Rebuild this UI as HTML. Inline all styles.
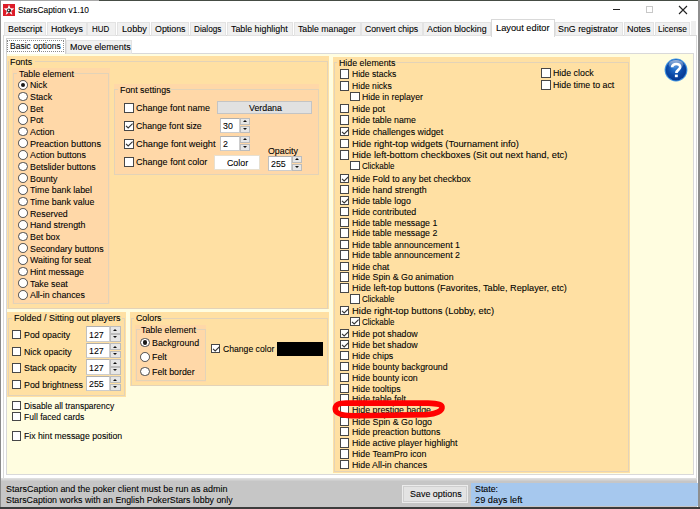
<!DOCTYPE html>
<html><head><meta charset="utf-8"><style>
*{margin:0;padding:0;box-sizing:border-box}
html,body{width:700px;height:509px;overflow:hidden;background:#fff;position:relative;font-family:"Liberation Sans",sans-serif}
.t{position:absolute;white-space:nowrap;line-height:12px;font-size:9.6px;color:#000;-webkit-text-stroke:0.08px #000;transform-origin:0 50%}
.bx{position:absolute}
.cb{position:absolute;width:9.7px;height:9.5px;border:1px solid #474747;background:#fff}
.rb{position:absolute;width:9.7px;height:9.7px;border:1px solid #4a4a4a;border-radius:50%;background:#fff}
.rb i{position:absolute;left:1.8px;top:1.8px;width:4.5px;height:4.5px;border-radius:50%;background:#1a1a1a}
.tb{position:absolute;background:#fff;border:1px solid #cdcdcd;border-top-color:#b0b0b0;border-left-color:#c0c0c0}
.sp{position:absolute;background:#e6e6e6;border:1px solid #bcbcbc}
.sp b{position:absolute;left:50%;top:50%;width:0;height:0;border-left:2.5px solid transparent;border-right:2.5px solid transparent;margin-left:-2.5px}
.sp b.up{border-bottom:2.6px solid #111;margin-top:-1.0px}
.sp b.dn{border-top:2.6px solid #111;margin-top:-1.8px}
.tab{position:absolute;background:#f0f0f0;border:1px solid #e3e3e3}
</style></head>
<body>
<div class="bx" style="left:0px;top:0px;width:99px;height:1px;background:#a8a8a8;"></div>
<div class="bx" style="left:99px;top:0px;width:601px;height:1px;background:#454c44;"></div>
<div class="bx" style="left:0px;top:0px;width:1.2px;height:509px;background:#8a8a8a;"></div>
<div class="bx" style="left:698px;top:0px;width:1.5px;height:509px;background:#8e8e8e;"></div>
<svg class="bx" style="left:3px;top:3.5px" width="12" height="12" viewBox="0 0 12 12"><rect width="12" height="12" fill="#dd1c28"/><path d="M6 0.6 L7.35 4.3 L11.4 4.4 L8.2 6.9 L9.35 10.9 L6 8.6 L2.65 10.9 L3.8 6.9 L0.6 4.4 L4.65 4.3 Z" fill="#fff"/><circle cx="6" cy="6.6" r="2.1" fill="#1a1a1a"/><circle cx="5.6" cy="6.3" r="0.9" fill="#fff"/></svg>
<div class="t" style="left:17.9px;top:3.8px;font-size:9.6px;color:#000;transform:scaleX(0.8702)">StarsCaption v1.10</div>
<div class="bx" style="left:612.6px;top:9.2px;width:7.699999999999932px;height:1.200000000000001px;background:#222;"></div>
<div class="bx" style="left:645.5px;top:6.4px;width:7.5px;height:6.8px;border:1px solid #c8c8c8"></div>
<svg class="bx" style="left:678px;top:5px" width="10" height="10" viewBox="0 0 10 10"><path d="M1 1 L9 9 M9 1 L1 9" stroke="#222" stroke-width="1.1"/></svg>
<div class="bx" style="left:2.6px;top:35.3px;width:694.5px;height:444.5px;border:1px solid #d9d9d9;background:#fff"></div>
<div class="tab" style="left:3.8px;top:22.3px;width:42.1px;height:13.5px"></div>
<div class="t" style="left:7.7px;top:22.9px;font-size:9.6px;color:#000;transform:scaleX(0.9191)">Betscript</div>
<div class="tab" style="left:46.6px;top:22.3px;width:39.99999999999999px;height:13.5px"></div>
<div class="t" style="left:51px;top:22.9px;font-size:9.6px;color:#000;transform:scaleX(0.9200)">Hotkeys</div>
<div class="tab" style="left:87.4px;top:22.3px;width:29.0px;height:13.5px"></div>
<div class="t" style="left:91.7px;top:22.9px;font-size:9.6px;color:#000;transform:scaleX(0.8275)">HUD</div>
<div class="tab" style="left:116.9px;top:22.3px;width:33.400000000000006px;height:13.5px"></div>
<div class="t" style="left:122px;top:22.9px;font-size:9.6px;color:#000;transform:scaleX(0.9526)">Lobby</div>
<div class="tab" style="left:151px;top:22.3px;width:38.19999999999999px;height:13.5px"></div>
<div class="t" style="left:154.9px;top:22.9px;font-size:9.6px;color:#000;transform:scaleX(0.9225)">Options</div>
<div class="tab" style="left:189.7px;top:22.3px;width:36.30000000000001px;height:13.5px"></div>
<div class="t" style="left:194px;top:22.9px;font-size:9.6px;color:#000;transform:scaleX(0.8564)">Dialogs</div>
<div class="tab" style="left:226.5px;top:22.3px;width:66.39999999999998px;height:13.5px"></div>
<div class="t" style="left:231.1px;top:22.9px;font-size:9.6px;color:#000;transform:scaleX(0.9228)">Table highlight</div>
<div class="tab" style="left:293.7px;top:22.3px;width:67.19999999999999px;height:13.5px"></div>
<div class="t" style="left:298px;top:22.9px;font-size:9.6px;color:#000;transform:scaleX(0.9092)">Table manager</div>
<div class="tab" style="left:361.4px;top:22.3px;width:61.200000000000045px;height:13.5px"></div>
<div class="t" style="left:365.1px;top:22.9px;font-size:9.6px;color:#000;transform:scaleX(0.9070)">Convert chips</div>
<div class="tab" style="left:423.4px;top:22.3px;width:67.20000000000005px;height:13.5px"></div>
<div class="t" style="left:427.4px;top:22.9px;font-size:9.6px;color:#000;transform:scaleX(0.9252)">Action blocking</div>
<div class="bx" style="left:491px;top:19.4px;width:63.5px;height:17.5px;background:#fff;border:1px solid #d9d9d9;border-bottom:none"></div>
<div class="t" style="left:496.2px;top:21.6px;font-size:9.6px;color:#000;transform:scaleX(0.9645)">Layout editor</div>
<div class="tab" style="left:555.4px;top:22.3px;width:67.5px;height:13.5px"></div>
<div class="t" style="left:558.1px;top:22.9px;font-size:9.6px;color:#000;transform:scaleX(0.9224)">SnG registrator</div>
<div class="tab" style="left:623.9px;top:22.3px;width:30.0px;height:13.5px"></div>
<div class="t" style="left:626.7px;top:22.9px;font-size:9.6px;color:#000;transform:scaleX(0.9417)">Notes</div>
<div class="tab" style="left:655px;top:22.3px;width:35.39999999999998px;height:13.5px"></div>
<div class="t" style="left:658.2px;top:22.9px;font-size:9.6px;color:#000;transform:scaleX(0.8740)">License</div>
<div class="bx" style="left:690.6px;top:20.8px;width:5.899999999999977px;height:13.8px;background:#efefef;"></div>
<div class="bx" style="left:6.3px;top:53.3px;width:688.1px;height:421.4px;border:1px solid #d9d9d9;background:#fffde0"></div>
<div class="tab" style="left:65.6px;top:40.4px;width:66.2px;height:13.4px"></div>
<div class="t" style="left:69.6px;top:41.1px;font-size:9.6px;color:#000;transform:scaleX(0.9331)">Move elements</div>
<div class="bx" style="left:5.8px;top:38.3px;width:59.8px;height:16px;background:#fff;border:1px solid #d0d0d0;border-bottom:none"></div>
<div class="bx" style="left:7.4px;top:40.3px;width:56.8px;height:11.8px;border:1px dotted #8a8a8a"></div>
<div class="t" style="left:10.3px;top:39.5px;font-size:9.6px;color:#000;transform:scaleX(0.8885)">Basic options</div>
<div class="bx" style="left:7.2px;top:55.8px;width:321.6px;height:253.39999999999998px;background:#ffe0a3;"></div>
<div class="bx" style="left:8.0px;top:61.3px;width:320.2px;height:247.7px;border:1px solid #e3d3b8;box-sizing:border-box"></div>
<div class="bx" style="left:8.7px;top:61px;width:26px;height:2px;background:#ffe0a3"></div>
<div class="t" style="left:10.2px;top:56.2px;font-size:9.6px;color:#000;transform:scaleX(0.9200)">Fonts</div>
<div class="bx" style="left:11.9px;top:67.6px;width:98.1px;height:236.4px;background:#ffd8a8;"></div>
<div class="bx" style="left:12.700000000000001px;top:72.5px;width:96.7px;height:231.3px;border:1px solid #e3d3b8;box-sizing:border-box"></div>
<div class="bx" style="left:17.0px;top:72.2px;width:55px;height:2px;background:#ffd8a8"></div>
<div class="t" style="left:18.5px;top:67.5px;font-size:9.6px;color:#000;transform:scaleX(0.9200)">Table element</div>
<div class="rb" style="left:17.9px;top:80.1px"><i></i></div>
<div class="t" style="left:30.2px;top:79.2px;font-size:9.6px;color:#000;transform:scaleX(0.9200)">Nick</div>
<div class="rb" style="left:17.9px;top:91.7px"></div>
<div class="t" style="left:30.2px;top:90.8px;font-size:9.6px;color:#000;transform:scaleX(0.9200)">Stack</div>
<div class="rb" style="left:17.9px;top:103.4px"></div>
<div class="t" style="left:30.2px;top:102.5px;font-size:9.6px;color:#000;transform:scaleX(0.9200)">Bet</div>
<div class="rb" style="left:17.9px;top:115.1px"></div>
<div class="t" style="left:30.2px;top:114.2px;font-size:9.6px;color:#000;transform:scaleX(0.9200)">Pot</div>
<div class="rb" style="left:17.9px;top:126.7px"></div>
<div class="t" style="left:30.2px;top:125.8px;font-size:9.6px;color:#000;transform:scaleX(0.9200)">Action</div>
<div class="rb" style="left:17.9px;top:138.4px"></div>
<div class="t" style="left:30.2px;top:137.5px;font-size:9.6px;color:#000;transform:scaleX(0.9509)">Preaction buttons</div>
<div class="rb" style="left:17.9px;top:150.1px"></div>
<div class="t" style="left:30.2px;top:149.2px;font-size:9.6px;color:#000;transform:scaleX(0.9200)">Action buttons</div>
<div class="rb" style="left:17.9px;top:161.7px"></div>
<div class="t" style="left:30.2px;top:160.8px;font-size:9.6px;color:#000;transform:scaleX(0.9200)">Betslider buttons</div>
<div class="rb" style="left:17.9px;top:173.4px"></div>
<div class="t" style="left:30.2px;top:172.5px;font-size:9.6px;color:#000;transform:scaleX(0.9200)">Bounty</div>
<div class="rb" style="left:17.9px;top:185.1px"></div>
<div class="t" style="left:30.2px;top:184.2px;font-size:9.6px;color:#000;transform:scaleX(0.9200)">Time bank label</div>
<div class="rb" style="left:17.9px;top:196.8px"></div>
<div class="t" style="left:30.2px;top:195.9px;font-size:9.6px;color:#000;transform:scaleX(0.9200)">Time bank value</div>
<div class="rb" style="left:17.9px;top:208.4px"></div>
<div class="t" style="left:30.2px;top:207.5px;font-size:9.6px;color:#000;transform:scaleX(0.9200)">Reserved</div>
<div class="rb" style="left:17.9px;top:220.1px"></div>
<div class="t" style="left:30.2px;top:219.2px;font-size:9.6px;color:#000;transform:scaleX(0.9200)">Hand strength</div>
<div class="rb" style="left:17.9px;top:231.8px"></div>
<div class="t" style="left:30.2px;top:230.9px;font-size:9.6px;color:#000;transform:scaleX(0.9200)">Bet box</div>
<div class="rb" style="left:17.9px;top:243.4px"></div>
<div class="t" style="left:30.2px;top:242.5px;font-size:9.6px;color:#000;transform:scaleX(0.9200)">Secondary buttons</div>
<div class="rb" style="left:17.9px;top:255.1px"></div>
<div class="t" style="left:30.2px;top:254.2px;font-size:9.6px;color:#000;transform:scaleX(0.9200)">Waiting for seat</div>
<div class="rb" style="left:17.9px;top:266.8px"></div>
<div class="t" style="left:30.2px;top:265.9px;font-size:9.6px;color:#000;transform:scaleX(0.9200)">Hint message</div>
<div class="rb" style="left:17.9px;top:278.4px"></div>
<div class="t" style="left:30.2px;top:277.5px;font-size:9.6px;color:#000;transform:scaleX(0.9200)">Take seat</div>
<div class="rb" style="left:17.9px;top:290.1px"></div>
<div class="t" style="left:30.2px;top:289.2px;font-size:9.6px;color:#000;transform:scaleX(0.9200)">All-in chances</div>
<div class="bx" style="left:113.6px;top:84.4px;width:205.70000000000002px;height:90.79999999999998px;background:#ffd8a8;"></div>
<div class="bx" style="left:114.39999999999999px;top:89.1px;width:204.3px;height:85.9px;border:1px solid #e3d3b8;box-sizing:border-box"></div>
<div class="bx" style="left:118.3px;top:88.8px;width:53px;height:2px;background:#ffd8a8"></div>
<div class="t" style="left:119.8px;top:84.0px;font-size:9.6px;color:#000;transform:scaleX(0.9200)">Font settings</div>
<div class="cb" style="left:124.0px;top:103.2px"></div>
<div class="t" style="left:136.0px;top:102.2px;font-size:9.6px;color:#000;transform:scaleX(0.9374)">Change font name</div>
<div class="bx" style="left:216.7px;top:100.6px;width:95.3px;height:13.8px;background:#e1e1e1;border:1px solid #c4c4c4"></div>
<div class="t" style="left:248.5px;top:101.8px;font-size:9.6px;color:#000;transform:scaleX(0.9200)">Verdana</div>
<div class="cb" style="left:124.0px;top:121.2px"><svg width="10" height="10" viewBox="0 0 10 10" style="position:absolute;left:-1px;top:-1px"><path d="M2 4.8 L4.2 7 L8.6 2.6" fill="none" stroke="#333" stroke-width="1.1"/></svg></div>
<div class="t" style="left:136.0px;top:120.2px;font-size:9.6px;color:#000;transform:scaleX(0.9125)">Change font size</div>
<div class="tb" style="left:220px;top:117.7px;width:20.19999999999999px;height:15.499999999999986px"></div>
<div class="t" style="left:223px;top:120.0px;font-size:9.6px;color:#000;transform:scaleX(0.9200)">30</div>
<div class="sp" style="left:240.2px;top:117.7px;width:9.800000000000011px;height:7.4px"><b class="up"></b></div>
<div class="sp" style="left:240.2px;top:125.7px;width:9.800000000000011px;height:7.4px"><b class="dn"></b></div>
<div class="cb" style="left:124.0px;top:139.2px"><svg width="10" height="10" viewBox="0 0 10 10" style="position:absolute;left:-1px;top:-1px"><path d="M2 4.8 L4.2 7 L8.6 2.6" fill="none" stroke="#333" stroke-width="1.1"/></svg></div>
<div class="t" style="left:136.0px;top:138.2px;font-size:9.6px;color:#000;transform:scaleX(0.9616)">Change font weight</div>
<div class="tb" style="left:220px;top:135.8px;width:20.19999999999999px;height:15.399999999999977px"></div>
<div class="t" style="left:223px;top:138.1px;font-size:9.6px;color:#000;transform:scaleX(0.9200)">2</div>
<div class="sp" style="left:240.2px;top:135.8px;width:9.800000000000011px;height:7.4px"><b class="up"></b></div>
<div class="sp" style="left:240.2px;top:143.8px;width:9.800000000000011px;height:7.4px"><b class="dn"></b></div>
<div class="cb" style="left:124.0px;top:157.2px"></div>
<div class="t" style="left:136.0px;top:156.2px;font-size:9.6px;color:#000;transform:scaleX(0.9415)">Change font color</div>
<div class="bx" style="left:214px;top:154.9px;width:46px;height:15.4px;background:#fff;border:1px solid #e8e0d0"></div>
<div class="t" style="left:226.5px;top:156.8px;font-size:9.6px;color:#000;transform:scaleX(0.9200)">Color</div>
<div class="t" style="left:268.3px;top:144.8px;font-size:9.6px;color:#000;transform:scaleX(0.9200)">Opacity</div>
<div class="tb" style="left:267.7px;top:155.5px;width:24.600000000000023px;height:15.5px"></div>
<div class="t" style="left:270.7px;top:157.8px;font-size:9.6px;color:#000;transform:scaleX(0.9200)">255</div>
<div class="sp" style="left:292.3px;top:155.5px;width:9.899999999999977px;height:7.5px"><b class="up"></b></div>
<div class="sp" style="left:292.3px;top:163.6px;width:9.899999999999977px;height:7.5px"><b class="dn"></b></div>
<div class="bx" style="left:7.1px;top:311.9px;width:118.9px;height:84.70000000000005px;background:#ffe0a3;"></div>
<div class="bx" style="left:7.8999999999999995px;top:317.5px;width:117.5px;height:78.90000000000003px;border:1px solid #e3d3b8;box-sizing:border-box"></div>
<div class="bx" style="left:12.1px;top:317.2px;width:110px;height:2px;background:#ffe0a3"></div>
<div class="t" style="left:13.6px;top:312.4px;font-size:9.6px;color:#000;transform:scaleX(0.9385)">Folded / Sitting out players</div>
<div class="cb" style="left:11.8px;top:329.9px"></div>
<div class="t" style="left:23.8px;top:328.9px;font-size:9.6px;color:#000;transform:scaleX(0.9200)">Pod opacity</div>
<div class="tb" style="left:86.3px;top:326.3px;width:23.60000000000001px;height:15.300000000000011px"></div>
<div class="t" style="left:89.3px;top:328.5px;font-size:9.6px;color:#000;transform:scaleX(0.9200)">127</div>
<div class="sp" style="left:109.9px;top:326.3px;width:10.899999999999991px;height:7.4px"><b class="up"></b></div>
<div class="sp" style="left:109.9px;top:334.3px;width:10.899999999999991px;height:7.4px"><b class="dn"></b></div>
<div class="cb" style="left:11.8px;top:346.5px"></div>
<div class="t" style="left:23.8px;top:345.5px;font-size:9.6px;color:#000;transform:scaleX(0.9200)">Nick opacity</div>
<div class="tb" style="left:86.3px;top:342.85px;width:23.60000000000001px;height:15.300000000000011px"></div>
<div class="t" style="left:89.3px;top:345.1px;font-size:9.6px;color:#000;transform:scaleX(0.9200)">127</div>
<div class="sp" style="left:109.9px;top:342.85px;width:10.899999999999991px;height:7.4px"><b class="up"></b></div>
<div class="sp" style="left:109.9px;top:350.8px;width:10.899999999999991px;height:7.4px"><b class="dn"></b></div>
<div class="cb" style="left:11.8px;top:363.1px"></div>
<div class="t" style="left:23.8px;top:362.1px;font-size:9.6px;color:#000;transform:scaleX(0.9200)">Stack opacity</div>
<div class="tb" style="left:86.3px;top:359.40000000000003px;width:23.60000000000001px;height:15.300000000000011px"></div>
<div class="t" style="left:89.3px;top:361.6px;font-size:9.6px;color:#000;transform:scaleX(0.9200)">127</div>
<div class="sp" style="left:109.9px;top:359.40000000000003px;width:10.899999999999991px;height:7.4px"><b class="up"></b></div>
<div class="sp" style="left:109.9px;top:367.4px;width:10.899999999999991px;height:7.4px"><b class="dn"></b></div>
<div class="cb" style="left:11.8px;top:379.6px"></div>
<div class="t" style="left:23.8px;top:378.6px;font-size:9.6px;color:#000;transform:scaleX(0.9200)">Pod brightness</div>
<div class="tb" style="left:86.3px;top:375.95000000000005px;width:23.60000000000001px;height:15.300000000000011px"></div>
<div class="t" style="left:89.3px;top:378.2px;font-size:9.6px;color:#000;transform:scaleX(0.9200)">255</div>
<div class="sp" style="left:109.9px;top:375.95000000000005px;width:10.899999999999991px;height:7.4px"><b class="up"></b></div>
<div class="sp" style="left:109.9px;top:383.9px;width:10.899999999999991px;height:7.4px"><b class="dn"></b></div>
<div class="bx" style="left:130.3px;top:312.3px;width:198.7px;height:74.09999999999997px;background:#ffe0a3;"></div>
<div class="bx" style="left:131.10000000000002px;top:317.5px;width:197.29999999999995px;height:68.69999999999999px;border:1px solid #e3d3b8;box-sizing:border-box"></div>
<div class="bx" style="left:134.0px;top:317.2px;width:28px;height:2px;background:#ffe0a3"></div>
<div class="t" style="left:135.5px;top:312.4px;font-size:9.6px;color:#000;transform:scaleX(0.9200)">Colors</div>
<div class="bx" style="left:135px;top:324.5px;width:71.4px;height:57.19999999999999px;background:#ffd8a8;"></div>
<div class="bx" style="left:135.8px;top:328.6px;width:70.0px;height:52.89999999999998px;border:1px solid #e3d3b8;box-sizing:border-box"></div>
<div class="bx" style="left:139.8px;top:328.3px;width:55px;height:2px;background:#ffd8a8"></div>
<div class="t" style="left:141.3px;top:323.6px;font-size:9.6px;color:#000;transform:scaleX(0.9200)">Table element</div>
<div class="rb" style="left:140.1px;top:337.5px"><i></i></div>
<div class="t" style="left:152.4px;top:336.6px;font-size:9.6px;color:#000;transform:scaleX(0.9200)">Background</div>
<div class="rb" style="left:140.1px;top:352.3px"></div>
<div class="t" style="left:152.4px;top:351.4px;font-size:9.6px;color:#000;transform:scaleX(0.9200)">Felt</div>
<div class="rb" style="left:140.1px;top:366.8px"></div>
<div class="t" style="left:152.4px;top:365.9px;font-size:9.6px;color:#000;transform:scaleX(0.9200)">Felt border</div>
<div class="cb" style="left:210.5px;top:343.9px"><svg width="10" height="10" viewBox="0 0 10 10" style="position:absolute;left:-1px;top:-1px"><path d="M2 4.8 L4.2 7 L8.6 2.6" fill="none" stroke="#333" stroke-width="1.1"/></svg></div>
<div class="t" style="left:222.5px;top:342.9px;font-size:9.6px;color:#000;transform:scaleX(0.8990)">Change color</div>
<div class="bx" style="left:276.5px;top:341.5px;width:46.19999999999999px;height:14.5px;background:#000;"></div>
<div class="cb" style="left:11.8px;top:400.8px"></div>
<div class="t" style="left:23.8px;top:399.8px;font-size:9.6px;color:#000;transform:scaleX(0.8810)">Disable all transparency</div>
<div class="cb" style="left:11.8px;top:411.9px"></div>
<div class="t" style="left:23.8px;top:410.9px;font-size:9.6px;color:#000;transform:scaleX(0.8919)">Full faced cards</div>
<div class="cb" style="left:11.8px;top:431.2px"></div>
<div class="t" style="left:23.8px;top:430.2px;font-size:9.6px;color:#000;transform:scaleX(0.9072)">Fix hint message position</div>
<div class="bx" style="left:333.1px;top:57.1px;width:296.9px;height:415.5px;background:#ffe0a3;"></div>
<div class="bx" style="left:333.90000000000003px;top:61.8px;width:295.49999999999994px;height:410.6px;border:1px solid #e3d3b8;box-sizing:border-box"></div>
<div class="bx" style="left:337.2px;top:61.5px;width:55px;height:2px;background:#ffe0a3"></div>
<div class="t" style="left:338.7px;top:56.8px;font-size:9.6px;color:#000;transform:scaleX(0.9200)">Hide elements</div>
<div class="cb" style="left:339.6px;top:69.0px"></div>
<div class="t" style="left:351.6px;top:68.0px;font-size:9.6px;color:#000;transform:scaleX(0.8934)">Hide stacks</div>
<div class="cb" style="left:339.6px;top:81.0px"></div>
<div class="t" style="left:351.6px;top:80.0px;font-size:9.6px;color:#000;transform:scaleX(0.8971)">Hide nicks</div>
<div class="cb" style="left:350.40000000000003px;top:91.5px"></div>
<div class="t" style="left:362.40000000000003px;top:90.5px;font-size:9.6px;color:#000;transform:scaleX(0.9064)">Hide in replayer</div>
<div class="cb" style="left:339.6px;top:103.8px"></div>
<div class="t" style="left:351.6px;top:102.8px;font-size:9.6px;color:#000;transform:scaleX(0.9200)">Hide pot</div>
<div class="cb" style="left:339.6px;top:115.2px"></div>
<div class="t" style="left:351.6px;top:114.2px;font-size:9.6px;color:#000;transform:scaleX(0.9161)">Hide table name</div>
<div class="cb" style="left:339.6px;top:126.7px"><svg width="10" height="10" viewBox="0 0 10 10" style="position:absolute;left:-1px;top:-1px"><path d="M2 4.8 L4.2 7 L8.6 2.6" fill="none" stroke="#333" stroke-width="1.1"/></svg></div>
<div class="t" style="left:351.6px;top:125.7px;font-size:9.6px;color:#000;transform:scaleX(0.9244)">Hide challenges widget</div>
<div class="cb" style="left:339.6px;top:138.7px"></div>
<div class="t" style="left:351.6px;top:137.7px;font-size:9.6px;color:#000;transform:scaleX(0.9781)">Hide right-top widgets (Tournament info)</div>
<div class="cb" style="left:339.6px;top:150.2px"></div>
<div class="t" style="left:351.6px;top:149.2px;font-size:9.6px;color:#000;transform:scaleX(0.9780)">Hide left-bottom checkboxes (Sit out next hand, etc)</div>
<div class="cb" style="left:350.40000000000003px;top:160.9px"></div>
<div class="t" style="left:362.40000000000003px;top:159.9px;font-size:9.6px;color:#000;transform:scaleX(0.8324)">Clickable</div>
<div class="cb" style="left:339.6px;top:173.8px"><svg width="10" height="10" viewBox="0 0 10 10" style="position:absolute;left:-1px;top:-1px"><path d="M2 4.8 L4.2 7 L8.6 2.6" fill="none" stroke="#333" stroke-width="1.1"/></svg></div>
<div class="t" style="left:351.6px;top:172.8px;font-size:9.6px;color:#000;transform:scaleX(0.9200)">Hide Fold to any bet checkbox</div>
<div class="cb" style="left:339.6px;top:184.7px"></div>
<div class="t" style="left:351.6px;top:183.7px;font-size:9.6px;color:#000;transform:scaleX(0.9200)">Hide hand strength</div>
<div class="cb" style="left:339.6px;top:195.8px"><svg width="10" height="10" viewBox="0 0 10 10" style="position:absolute;left:-1px;top:-1px"><path d="M2 4.8 L4.2 7 L8.6 2.6" fill="none" stroke="#333" stroke-width="1.1"/></svg></div>
<div class="t" style="left:351.6px;top:194.8px;font-size:9.6px;color:#000;transform:scaleX(0.9200)">Hide table logo</div>
<div class="cb" style="left:339.6px;top:206.7px"></div>
<div class="t" style="left:351.6px;top:205.7px;font-size:9.6px;color:#000;transform:scaleX(0.9200)">Hide contributed</div>
<div class="cb" style="left:339.6px;top:217.6px"></div>
<div class="t" style="left:351.6px;top:216.6px;font-size:9.6px;color:#000;transform:scaleX(0.9200)">Hide table message 1</div>
<div class="cb" style="left:339.6px;top:228.3px"></div>
<div class="t" style="left:351.6px;top:227.3px;font-size:9.6px;color:#000;transform:scaleX(0.9200)">Hide table message 2</div>
<div class="cb" style="left:339.6px;top:239.6px"></div>
<div class="t" style="left:351.6px;top:238.6px;font-size:9.6px;color:#000;transform:scaleX(0.9200)">Hide table announcement 1</div>
<div class="cb" style="left:339.6px;top:250.3px"></div>
<div class="t" style="left:351.6px;top:249.3px;font-size:9.6px;color:#000;transform:scaleX(0.9200)">Hide table announcement 2</div>
<div class="cb" style="left:339.6px;top:261.6px"></div>
<div class="t" style="left:351.6px;top:260.6px;font-size:9.6px;color:#000;transform:scaleX(0.9200)">Hide chat</div>
<div class="cb" style="left:339.6px;top:272.4px"></div>
<div class="t" style="left:351.6px;top:271.4px;font-size:9.6px;color:#000;transform:scaleX(0.9200)">Hide Spin &amp; Go animation</div>
<div class="cb" style="left:339.6px;top:283.2px"></div>
<div class="t" style="left:351.6px;top:282.2px;font-size:9.6px;color:#000;transform:scaleX(0.9604)">Hide left-top buttons (Favorites, Table, Replayer, etc)</div>
<div class="cb" style="left:350.40000000000003px;top:294.1px"></div>
<div class="t" style="left:362.40000000000003px;top:293.1px;font-size:9.6px;color:#000;transform:scaleX(0.8324)">Clickable</div>
<div class="cb" style="left:339.6px;top:305.6px"><svg width="10" height="10" viewBox="0 0 10 10" style="position:absolute;left:-1px;top:-1px"><path d="M2 4.8 L4.2 7 L8.6 2.6" fill="none" stroke="#333" stroke-width="1.1"/></svg></div>
<div class="t" style="left:351.6px;top:304.6px;font-size:9.6px;color:#000;transform:scaleX(0.9852)">Hide right-top buttons (Lobby, etc)</div>
<div class="cb" style="left:350.40000000000003px;top:316.6px"><svg width="10" height="10" viewBox="0 0 10 10" style="position:absolute;left:-1px;top:-1px"><path d="M2 4.8 L4.2 7 L8.6 2.6" fill="none" stroke="#333" stroke-width="1.1"/></svg></div>
<div class="t" style="left:362.40000000000003px;top:315.6px;font-size:9.6px;color:#000;transform:scaleX(0.8324)">Clickable</div>
<div class="cb" style="left:339.6px;top:328.6px"><svg width="10" height="10" viewBox="0 0 10 10" style="position:absolute;left:-1px;top:-1px"><path d="M2 4.8 L4.2 7 L8.6 2.6" fill="none" stroke="#333" stroke-width="1.1"/></svg></div>
<div class="t" style="left:351.6px;top:327.6px;font-size:9.6px;color:#000;transform:scaleX(0.9200)">Hide pot shadow</div>
<div class="cb" style="left:339.6px;top:339.9px"><svg width="10" height="10" viewBox="0 0 10 10" style="position:absolute;left:-1px;top:-1px"><path d="M2 4.8 L4.2 7 L8.6 2.6" fill="none" stroke="#333" stroke-width="1.1"/></svg></div>
<div class="t" style="left:351.6px;top:338.9px;font-size:9.6px;color:#000;transform:scaleX(0.9200)">Hide bet shadow</div>
<div class="cb" style="left:339.6px;top:350.9px"></div>
<div class="t" style="left:351.6px;top:349.9px;font-size:9.6px;color:#000;transform:scaleX(0.9200)">Hide chips</div>
<div class="cb" style="left:339.6px;top:361.6px"></div>
<div class="t" style="left:351.6px;top:360.6px;font-size:9.6px;color:#000;transform:scaleX(0.9200)">Hide bounty background</div>
<div class="cb" style="left:339.6px;top:372.9px"></div>
<div class="t" style="left:351.6px;top:371.9px;font-size:9.6px;color:#000;transform:scaleX(0.9200)">Hide bounty icon</div>
<div class="cb" style="left:339.6px;top:383.9px"></div>
<div class="t" style="left:351.6px;top:382.9px;font-size:9.6px;color:#000;transform:scaleX(0.9200)">Hide tooltips</div>
<div class="cb" style="left:339.6px;top:393.6px"></div>
<div class="t" style="left:351.6px;top:392.6px;font-size:9.6px;color:#000;transform:scaleX(0.9200)">Hide table felt</div>
<div class="cb" style="left:339.6px;top:405.4px"></div>
<div class="t" style="left:351.6px;top:404.4px;font-size:9.6px;color:#000;transform:scaleX(0.9200)">Hide prestige badge</div>
<div class="cb" style="left:339.6px;top:416.9px"></div>
<div class="t" style="left:351.6px;top:415.9px;font-size:9.6px;color:#000;transform:scaleX(0.9200)">Hide Spin &amp; Go logo</div>
<div class="cb" style="left:339.6px;top:426.9px"></div>
<div class="t" style="left:351.6px;top:425.9px;font-size:9.6px;color:#000;transform:scaleX(0.9200)">Hide preaction buttons</div>
<div class="cb" style="left:339.6px;top:438.2px"></div>
<div class="t" style="left:351.6px;top:437.2px;font-size:9.6px;color:#000;transform:scaleX(0.9200)">Hide active player highlight</div>
<div class="cb" style="left:339.6px;top:449.1px"></div>
<div class="t" style="left:351.6px;top:448.1px;font-size:9.6px;color:#000;transform:scaleX(0.9200)">Hide TeamPro icon</div>
<div class="cb" style="left:339.6px;top:459.6px"></div>
<div class="t" style="left:351.6px;top:458.6px;font-size:9.6px;color:#000;transform:scaleX(0.9200)">Hide All-in chances</div>
<div class="cb" style="left:541px;top:68.2px"></div>
<div class="t" style="left:553px;top:67.2px;font-size:9.6px;color:#000;transform:scaleX(0.9200)">Hide clock</div>
<div class="cb" style="left:541px;top:80.2px"></div>
<div class="t" style="left:553px;top:79.2px;font-size:9.6px;color:#000;transform:scaleX(0.9200)">Hide time to act</div>
<svg class="bx" style="left:663.5px;top:58px" width="24" height="24" viewBox="0 0 24 24">
<defs><radialGradient id="hg" cx="0.45" cy="0.4" r="0.65"><stop offset="0" stop-color="#2f7fd8"/><stop offset="0.55" stop-color="#0b4aa8"/><stop offset="1" stop-color="#07348a"/></radialGradient>
<linearGradient id="hl" x1="0" y1="0" x2="0" y2="1"><stop offset="0" stop-color="#fff" stop-opacity="0.6"/><stop offset="1" stop-color="#fff" stop-opacity="0"/></linearGradient></defs>
<circle cx="12" cy="12" r="11.4" fill="#3b8fe0"/><circle cx="12" cy="12" r="10.4" fill="url(#hg)"/>
<ellipse cx="12" cy="6.5" rx="7.5" ry="4.6" fill="url(#hl)"/>
<path d="M8.2 9.2 C8 5.2 16.2 4.8 16.2 9 C16.2 11.6 12.6 11.6 12.4 15" fill="none" stroke="#fff" stroke-width="2.7"/>
<rect x="10.9" y="16.6" width="2.9" height="2.6" fill="#fff"/></svg>
<svg class="bx" style="left:0;top:0" width="700" height="509" viewBox="0 0 700 509"><path d="M346 403 L428 403.1 C438.5 403.3 442.4 405 442 407.8 C441.5 411 437 413.8 426 414.6 L360 415.7 C343 416 335.4 413.8 335.3 409 C335.2 404.6 338.5 403 346 403 Z" fill="none" stroke="#ff0000" stroke-width="5.6"/></svg>
<div class="bx" style="left:1.2px;top:478.4px;width:695.8px;height:30.600000000000023px;background:#c6c6c6;"></div>
<div class="bx" style="left:1.2px;top:478.4px;width:695.8px;height:4px;background:linear-gradient(#e2e2e2,#c2c2c2)"></div>
<div class="bx" style="left:0px;top:507.4px;width:700px;height:1.6000000000000227px;background:#3c3c3c;"></div>
<div class="t" style="left:6.4px;top:482.9px;font-size:9.6px;color:#000;transform:scaleX(0.9355)">StarsCaption and the poker client must be run as admin</div>
<div class="t" style="left:6.4px;top:493.6px;font-size:9.6px;color:#000;transform:scaleX(0.9200)">StarsCaption works with an English PokerStars lobby only</div>
<div class="bx" style="left:402.3px;top:484.9px;width:65.6px;height:18.1px;background:#e3e3e3;border:1px solid #ececec;box-shadow:inset 0 0 0 1px #cfcfcf"></div>
<div class="t" style="left:409.5px;top:488.2px;font-size:9.6px;color:#000;transform:scaleX(0.9303)">Save options</div>
<div class="bx" style="left:471px;top:482.6px;width:226.5px;height:23.599999999999966px;background:#a6c8ee;"></div>
<div class="t" style="left:474.5px;top:483.2px;font-size:9.6px;color:#000;transform:scaleX(0.9200)">State:</div>
<div class="t" style="left:474.5px;top:493.8px;font-size:9.6px;color:#000;transform:scaleX(0.9640)">29 days left</div>
</body></html>
